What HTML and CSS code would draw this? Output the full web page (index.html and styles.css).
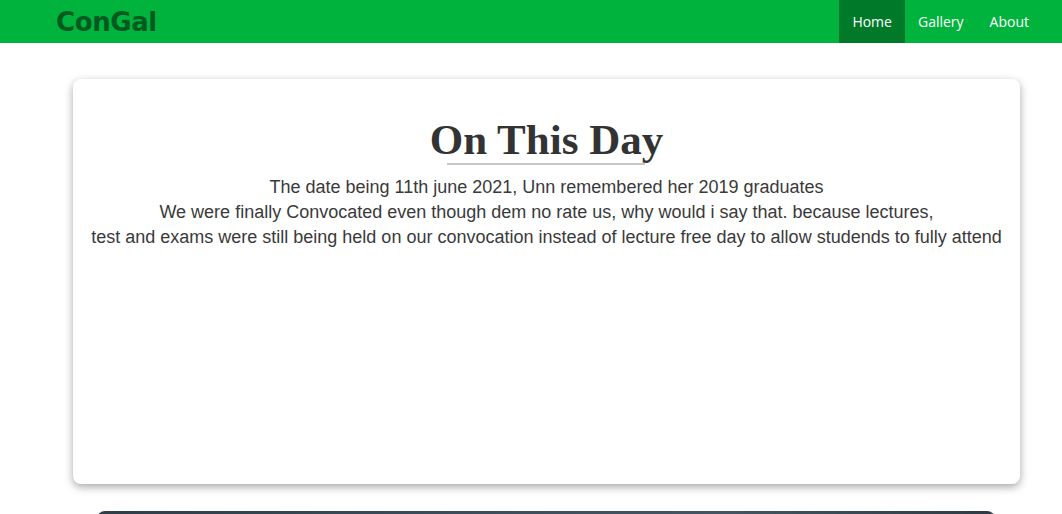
FILE: index.html
```html
<!DOCTYPE html>
<html>
<head>
<meta charset="utf-8">
<link rel="stylesheet" href="styles.css">
</head>
<body>
<header class="nav">
  <div class="logo">ConGal</div>
  <nav class="links">
    <a class="link active">Home</a>
    <a class="link">Gallery</a>
    <a class="link">About</a>
  </nav>
</header>
<main class="main">
  <section class="card">
    <h1 class="title">On This Day</h1>
    <div class="rule"></div>
    <p class="text">The date being 11th june 2021, Unn remembered her 2019 graduates<br>We were finally Convocated even though dem no rate us, why would i say that. because lectures,<br>test and exams were still being held on our convocation instead of lecture free day to allow studends to fully attend</p>
  </section>
  <div class="photo"></div>
</main>
</body>
</html>
```
FILE: styles.css
```css
html, body { margin: 0; padding: 0; background: #fff; overflow: hidden; }
.nav {
  height: 43px;
  background: #00b33c;
  display: flex;
  align-items: stretch;
  justify-content: space-between;
}
.logo {
  font-family: "DejaVu Sans", Verdana, sans-serif;
  font-weight: bold;
  font-size: 26px;
  color: #005a1f;
  padding-left: 56px;
  line-height: 44px;
  letter-spacing: -0.4px;
}
.links { display: flex; padding-right: 20px; }
.link {
  font-family: "Open Sans", sans-serif;
  font-size: 14px;
  color: #fff;
  padding: 0 13px;
  line-height: 43px;
}
.link.active { background: #007a29; }
.main { padding: 36px 42px 0 73px; }
.card {
  width: 947px;
  height: 405px;
  box-sizing: border-box;
  border-radius: 8px;
  box-shadow: 0 3px 8px rgba(0,0,0,0.35);
  background: #fff;
  padding-top: 114px;
  position: relative;
  text-align: center;
  color: #333;
}
.title {
  position: absolute;
  left: 0; right: 0; top: 36px;
  margin: 0;
  font-family: "Liberation Serif", serif;
  font-weight: bold;
  font-size: 43px;
  color: #333;
}
.rule {
  position: absolute;
  top: 84px;
  left: 374px;
  width: 198px;
  height: 2px;
  background: #c8c8c8;
}
.text {
  margin: -18px 0 0;
  font-family: "Liberation Sans", Arial, sans-serif;
  font-size: 18px;
  line-height: 25px;
  color: #3a3a3a;
  white-space: nowrap;
}
.photo {
  margin: 27px 0 0 24px;
  width: 898px;
  height: 40px;
  border-radius: 8px;
  background: linear-gradient(90deg, #2f3d47, #3c4e5a 40%, #445661 70%, #2f3b44);
}
```
